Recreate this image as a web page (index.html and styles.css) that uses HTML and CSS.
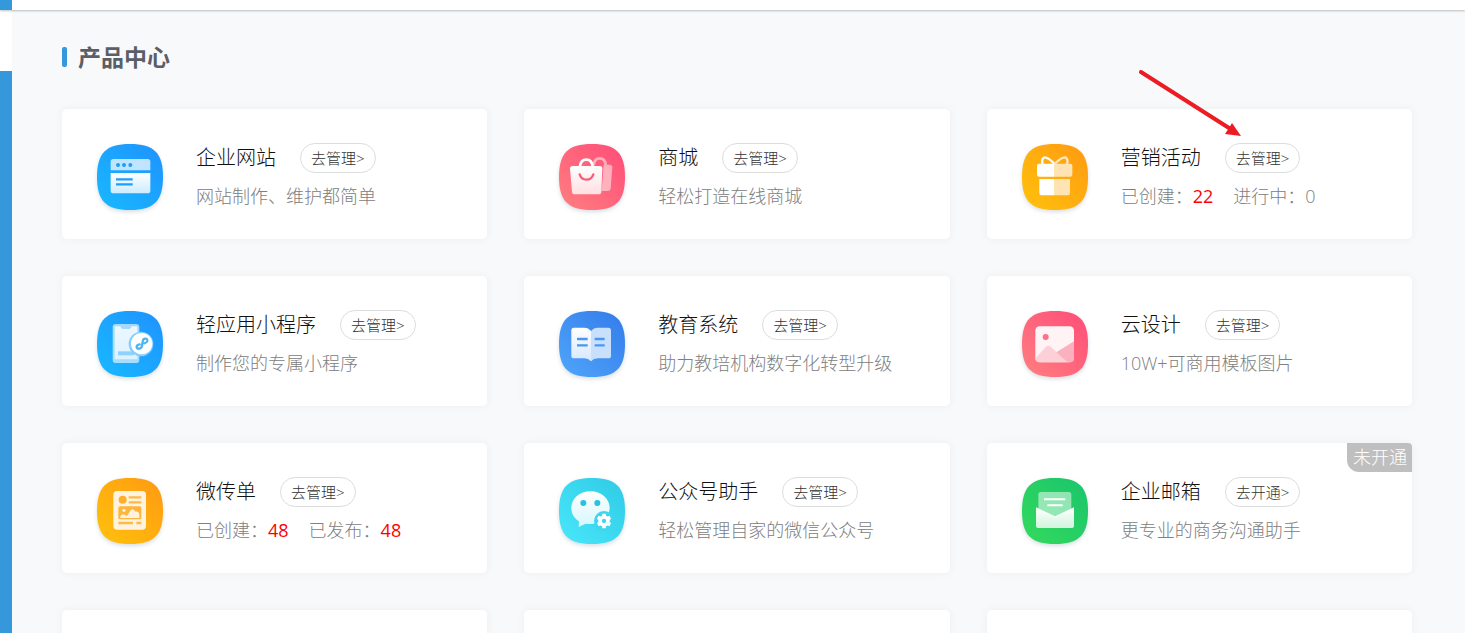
FILE: index.html
```html
<!DOCTYPE html>
<html lang="zh-CN">
<head>
<meta charset="utf-8">
<title>产品中心</title>
<link rel="stylesheet" href="styles.css">
</head>
<body>
<svg class="defs" width="0" height="0" aria-hidden="true">
  <defs>
    <path id="tile" d="M99 0C171 0 198 27 198 99S171 198 99 198 0 171 0 99 27 0 99 0Z"/>
    <linearGradient id="azure" x1="0" y1="1" x2="1" y2="0"><stop offset="0" stop-color="#18b9ff"/><stop offset="1" stop-color="#1f92ff"/></linearGradient>
    <linearGradient id="rose" x1="0" y1="1" x2="1" y2="0"><stop offset="0" stop-color="#ff7f80"/><stop offset="1" stop-color="#ff4c78"/></linearGradient>
    <linearGradient id="amber" x1="0" y1="1" x2="1" y2="0"><stop offset="0" stop-color="#ffc20c"/><stop offset="1" stop-color="#ff9912"/></linearGradient>
    <linearGradient id="ocean" x1="0" y1="1" x2="1" y2="0"><stop offset="0" stop-color="#4fa6fa"/><stop offset="1" stop-color="#347bea"/></linearGradient>
    <linearGradient id="cyan" x1="0" y1="1" x2="1" y2="0"><stop offset="0" stop-color="#4ae6fa"/><stop offset="1" stop-color="#2fcbe6"/></linearGradient>
    <linearGradient id="green" x1="0" y1="1" x2="1" y2="0"><stop offset="0" stop-color="#33da5c"/><stop offset="1" stop-color="#1bc46c"/></linearGradient>
    <linearGradient id="fade" x1="0" y1="0" x2="0" y2="1"><stop offset="0" stop-color="#fff"/><stop offset="1" stop-color="#fff" stop-opacity=".78"/></linearGradient>
  </defs>
</svg>

<header class="topbar"></header>
<div class="shell">
  <aside class="sidebar"><div class="sidebar-active"></div></aside>
  <main class="content">
    <h1 class="heading">产品中心</h1>
    <div class="grid">

      <section class="card">
        <svg class="icon" viewBox="0 0 198 198" aria-hidden="true">
          <use href="#tile" fill="url(#azure)"/>
          <path d="M49 45H152Q160 45 160 53V79H41V53Q41 45 49 45Z" fill="#fff" opacity=".72"/>
          <path d="M41 87H160V140Q160 148 152 148H49Q41 148 41 140Z" fill="url(#fade)"/>
          <g fill="#1f9dff"><circle cx="63" cy="63" r="6"/><circle cx="81" cy="63" r="6"/><circle cx="100" cy="63" r="6"/></g>
          <path d="M57 106H107M57 121H107" stroke="#1f9dff" stroke-width="7"/>
        </svg>
        <div class="info">
          <div class="title-row"><h2 class="title">企业网站</h2><button class="action" type="button">去管理&gt;</button></div>
          <p class="desc">网站制作、维护都简单</p>
        </div>
      </section>

      <section class="card">
        <svg class="icon" viewBox="0 0 198 198" aria-hidden="true">
          <use href="#tile" fill="url(#rose)"/>
          <g opacity=".5"><path d="M134 62H152Q160 62 160 70L155 134Q154 141 146 141H128Z" fill="#fff"/><path d="M104 64Q106 43 122 43Q139 43 140 64" fill="none" stroke="#fff" stroke-width="8"/></g>
          <path d="M41 66H122Q131 66 130 74L127 143Q127 151 118 151H48Q40 151 39 143L33 74Q33 66 41 66Z" fill="url(#fade)"/>
          <path d="M63 68Q65 47 82 47Q99 47 101 68" fill="none" stroke="#fff" stroke-width="8"/>
          <path d="M62 91Q66 107 82 107T103 91" fill="none" stroke="#ff5c7a" stroke-width="7" stroke-linecap="round"/>
        </svg>
        <div class="info">
          <div class="title-row"><h2 class="title">商城</h2><button class="action" type="button">去管理&gt;</button></div>
          <p class="desc">轻松打造在线商城</p>
        </div>
      </section>

      <section class="card">
        <svg class="icon" viewBox="0 0 198 198" aria-hidden="true">
          <use href="#tile" fill="url(#amber)"/>
          <path d="M98 59H51Q45 59 45 65V92Q45 98 51 98H98ZM98 105H52V148Q52 154 58 154H98Z" fill="#fff"/>
          <path d="M98 59H145Q151 59 151 65V92Q151 98 145 98H98ZM98 105H144V148Q144 154 138 154H98Z" fill="#ffe3b3"/>
          <path d="M98 60Q74 36 65 41Q58 47 62 60" fill="none" stroke="#fff" stroke-width="7"/>
          <path d="M98 60Q122 36 132 41Q139 47 135 60" fill="none" stroke="#ffe9c4" stroke-width="7"/>
        </svg>
        <div class="info">
          <div class="title-row"><h2 class="title">营销活动</h2><button class="action" type="button">去管理&gt;</button></div>
          <p class="desc stats"><span>已创建：<em class="count">22</em></span><span>进行中：0</span></p>
        </div>
        <svg class="arrow" viewBox="0 0 104 68" aria-hidden="true">
          <path d="M3 2L91 58" stroke="#ec1c24" stroke-width="4" stroke-linecap="round"/>
          <path d="M103 66L94 53L91 58L87 64Z" fill="#ec1c24"/>
        </svg>
      </section>

      <section class="card">
        <svg class="icon" viewBox="0 0 198 198" aria-hidden="true">
          <use href="#tile" fill="url(#azure)"/>
          <rect x="47" y="39" width="80" height="117" rx="10" fill="#fff" opacity=".6"/>
          <path d="M53 46H70Q72 54 78 54H97Q102 54 104 46H121V145H53Z" fill="url(#fade)" opacity=".8"/>
          <rect x="63" y="121" width="48" height="12" fill="#8fd2ff"/>
          <circle cx="132" cy="99" r="37" fill="#85cdff"/>
          <circle cx="134" cy="98" r="32" fill="#fff"/>
          <path d="M128 100Q119 101 119 108Q120 114 127 113Q134 112 135 104L137 92Q138 83 145 83Q152 83 151 90Q149 96 142 97" fill="none" stroke="#4db3f5" stroke-width="7" stroke-linecap="round"/>
        </svg>
        <div class="info">
          <div class="title-row"><h2 class="title">轻应用小程序</h2><button class="action" type="button">去管理&gt;</button></div>
          <p class="desc">制作您的专属小程序</p>
        </div>
      </section>

      <section class="card">
        <svg class="icon" viewBox="0 0 198 198" aria-hidden="true">
          <use href="#tile" fill="url(#ocean)"/>
          <path d="M96 60Q88 50 76 50H45Q37 50 37 58V134Q37 142 45 142H76Q88 142 96 151Z" fill="url(#fade)"/>
          <path d="M96 60Q104 50 116 50H148Q156 50 156 58V134Q156 142 148 142H116Q104 142 96 151Z" fill="#c9e0fc"/>
          <path d="M54 84H86M54 103H86M107 84H137M107 103H137" stroke="#4a97f3" stroke-width="7"/>
        </svg>
        <div class="info">
          <div class="title-row"><h2 class="title">教育系统</h2><button class="action" type="button">去管理&gt;</button></div>
          <p class="desc">助力教培机构数字化转型升级</p>
        </div>
      </section>

      <section class="card">
        <svg class="icon" viewBox="0 0 198 198" aria-hidden="true">
          <use href="#tile" fill="url(#rose)"/>
          <rect x="40" y="46" width="116" height="108" rx="13" fill="#fff3f5"/>
          <circle cx="71" cy="78" r="9" fill="#ff6f86"/>
          <path d="M40 142L72 107Q79 101 86 107L136 154H53Q40 154 40 141Z" fill="#fdd0d8"/>
          <path d="M103 124L156 91V141Q156 154 143 154H136Z" fill="#fbb0bf"/>
        </svg>
        <div class="info">
          <div class="title-row"><h2 class="title">云设计</h2><button class="action" type="button">去管理&gt;</button></div>
          <p class="desc">10W+可商用模板图片</p>
        </div>
      </section>

      <section class="card">
        <svg class="icon" viewBox="0 0 198 198" aria-hidden="true">
          <use href="#tile" fill="url(#amber)"/>
          <rect x="49" y="39" width="98" height="116" rx="12" fill="#fff3df"/>
          <circle cx="77" cy="65" r="12" fill="#ffae2b"/>
          <path d="M95 58H133M95 73H133M64 135H108M118 135H133" stroke="#ffb946" stroke-width="7"/>
          <rect x="64" y="85" width="69" height="39" rx="5" fill="#ffb43a"/>
          <path d="M70 120V115Q76 105 84 111L90 114L100 98Q105 91 111 96L116 101Q124 99 127 108V120Z" fill="#fff3df"/>
          <circle cx="81" cy="97" r="5" fill="#fff3df"/>
        </svg>
        <div class="info">
          <div class="title-row"><h2 class="title">微传单</h2><button class="action" type="button">去管理&gt;</button></div>
          <p class="desc stats"><span>已创建：<em class="count">48</em></span><span>已发布：<em class="count">48</em></span></p>
        </div>
      </section>

      <section class="card">
        <svg class="icon" viewBox="0 0 198 198" aria-hidden="true">
          <use href="#tile" fill="url(#cyan)"/>
          <path d="M94 40C126 40 152 62 152 90C152 118 126 138 94 138Q87 138 80 137L59 147L60 130C46 121 37 107 37 90C37 62 62 40 94 40Z" fill="url(#fade)"/>
          <circle cx="73" cy="75" r="9" fill="#25c3e0"/><circle cx="115" cy="75" r="9" fill="#25c3e0"/>
          <circle cx="135" cy="129" r="30" fill="#3cd6ee"/>
          <circle cx="135" cy="129" r="12" fill="none" stroke="#fff" stroke-width="11"/>
          <path d="M135 116V107M135 142V151M124 122L116 118M146 136L154 140M124 136L116 140M146 122L154 118" stroke="#fff" stroke-width="11"/>
        </svg>
        <div class="info">
          <div class="title-row"><h2 class="title">公众号助手</h2><button class="action" type="button">去管理&gt;</button></div>
          <p class="desc">轻松管理自家的微信公众号</p>
        </div>
      </section>

      <section class="card">
        <svg class="icon" viewBox="0 0 198 198" aria-hidden="true">
          <use href="#tile" fill="url(#green)"/>
          <path d="M57 42H140Q148 42 148 50V100L99 120L49 100V50Q49 42 57 42Z" fill="#fff" opacity=".5"/>
          <path d="M66 64H130M76 82H122" stroke="#fff" stroke-width="6"/>
          <path d="M42 88L99 115L156 88V144Q156 150 150 150H48Q42 150 42 144Z" fill="url(#fade)"/>
        </svg>
        <div class="info">
          <div class="title-row"><h2 class="title">企业邮箱</h2><button class="action" type="button">去开通&gt;</button></div>
          <p class="desc">更专业的商务沟通助手</p>
        </div>
        <span class="badge">未开通</span>
      </section>

      <section class="card"></section>
      <section class="card"></section>
      <section class="card"></section>
    </div>
  </main>
</div>
</body>
</html>
```
FILE: styles.css
```css
* {
  box-sizing: border-box;
}

body {
  margin: 0;
  height: 100vh;
  overflow: hidden;
  display: flex;
  flex-direction: column;
  background: #f8f9fb;
  font-family: "Open Sans", "Noto Sans CJK SC", sans-serif;
  font-weight: 300;
}

.defs {
  position: absolute;
}

.topbar {
  position: relative;
  flex: none;
  height: 10px;
  background: linear-gradient(to right, #3598dc 12px, #fff 12px);
  box-shadow: 0 1px 2px rgba(0, 0, 0, 0.25);
}

.shell {
  flex: 1;
  min-height: 0;
  display: flex;
  overflow: hidden;
}

.sidebar {
  flex: none;
  width: 12px;
  background: #3598dc;
}

.sidebar-active {
  height: 61px;
  background: #fff;
}

.content {
  flex: 1;
  padding: 31px 53px 0 50px;
}

.heading {
  display: flex;
  align-items: center;
  gap: 11px;
  margin: 0 0 36px;
  font-size: 23px;
  line-height: 32px;
  font-weight: 700;
  color: #5b5e66;
}

.heading::before {
  content: "";
  width: 5px;
  height: 20px;
  border-radius: 2px;
  background: #3598dc;
}

.grid {
  display: grid;
  grid-template-columns: repeat(3, 1fr);
  gap: 37px;
}

.card {
  position: relative;
  display: flex;
  align-items: flex-start;
  gap: 33px;
  min-height: 130px;
  padding: 34px 35px 24px;
  border-radius: 5px;
  background: #fff;
  box-shadow: 0 0 10px rgba(0, 0, 0, 0.05);
}

.icon {
  flex: none;
  width: 66px;
  height: 66px;
  margin-top: 1px;
  overflow: visible;
  filter: drop-shadow(0 2px 2px rgba(60, 90, 120, 0.2));
}

.info {
  min-width: 0;
}

.title-row {
  display: flex;
  align-items: center;
  gap: 24px;
  height: 30px;
}

.title {
  margin: 0;
  font-size: 20px;
  line-height: 28px;
  font-weight: 300;
  color: #111;
}

.action {
  height: 30px;
  padding: 0 10px;
  border: 1px solid #ddd;
  border-radius: 15px;
  background: #fff;
  font: inherit;
  font-size: 15px;
  line-height: 28px;
  color: #333;
}

.desc {
  margin: 11px 0 0;
  font-size: 18px;
  line-height: 24px;
  color: #808080;
  white-space: nowrap;
}

.stats {
  display: flex;
  gap: 20px;
}

.count {
  font-style: normal;
  font-weight: 400;
  color: #f00;
}

.badge {
  position: absolute;
  top: 0;
  right: 0;
  padding: 0 5px 0 6px;
  border-radius: 0 4px 0 12px;
  background: #bfbfbf;
  font-size: 18px;
  line-height: 29px;
  color: #fff;
}

.arrow {
  position: absolute;
  left: 151px;
  top: -39px;
  width: 104px;
  height: 68px;
}
```
